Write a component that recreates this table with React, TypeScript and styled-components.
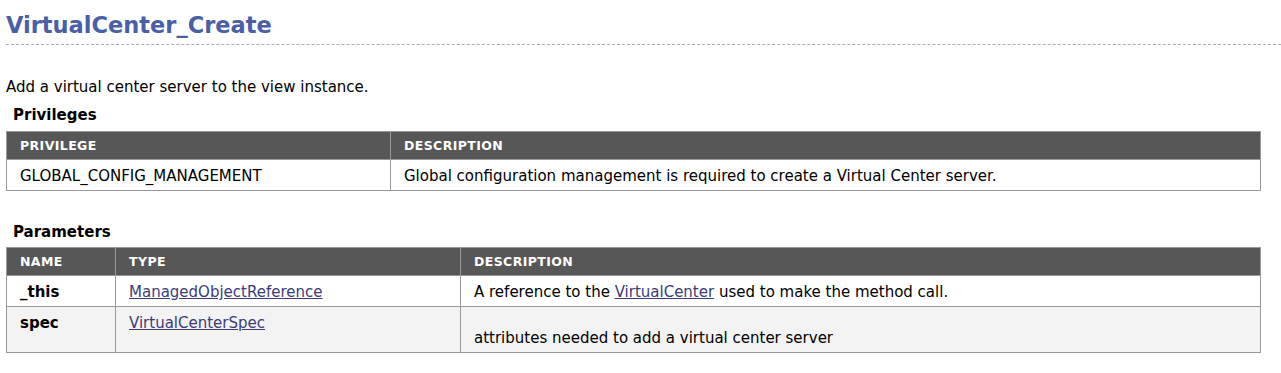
import React from "react";
import styled, { createGlobalStyle } from "styled-components";

const GlobalStyle = createGlobalStyle`
  html, body { margin: 0; padding: 0; background: #ffffff; }
  body { font-family: "DejaVu Sans", Verdana, sans-serif; color: #000; }
`;

const Page = styled.div`
  padding-left: 6px;
`;

const Title = styled.h1`
  margin: 0;
  padding: 12px 0 5px 0;
  font-size: 22.5px;
  line-height: 27px;
  font-weight: bold;
  color: #4a5fa7;
  border-bottom: 1px dashed #9fb0ae;
`;

const Lead = styled.p`
  margin: 33px 0 0 0;
  font-size: 15px;
  line-height: 18px;
`;

const SectionTitle = styled.h3<{ $gap: number }>`
  margin: ${(p) => p.$gap}px 0 ${(p) => (p.$gap > 20 ? 6 : 7)}px 7px;
  font-size: 15px;
  line-height: 18px;
  font-weight: bold;
`;

const Table = styled.table`
  width: 1254px;
  border-collapse: collapse;
  table-layout: fixed;
  font-size: 15px;
  border: 1px solid #999;
`;

const HeadCell = styled.th`
  background: #575757;
  color: #fff;
  text-align: left;
  font-size: 12.5px;
  line-height: 15px;
  font-weight: bold;
  letter-spacing: 0.4px;
  text-transform: uppercase;
  padding: 6px 13px;
  border: 1px solid #999;
`;

const Row = styled.tr<{ $alt?: boolean }>`
  background: ${(p) => (p.$alt ? "#f3f3f3" : "#ffffff")};
`;

const Cell = styled.td<{ $bold?: boolean }>`
  vertical-align: top;
  padding: 7px 13px 5px 13px;
  line-height: 18px;
  font-weight: ${(p) => (p.$bold ? "bold" : "normal")};
  border: 1px solid #999;
`;

const Link = styled.a`
  color: #3c3c78;
  text-decoration: underline;
`;

const LowerText = styled.div`
  margin: 15px 0 0 0;
`;

export default function App() {
  return (
    <Page>
      <GlobalStyle />
      <Title>VirtualCenter_Create</Title>
      <Lead>Add a virtual center server to the view instance.</Lead>
      <SectionTitle $gap={10}>Privileges</SectionTitle>
      <Table>
        <colgroup>
          <col style={{ width: 384 }} />
          <col style={{ width: 870 }} />
        </colgroup>
        <thead>
          <tr>
            <HeadCell>Privilege</HeadCell>
            <HeadCell>Description</HeadCell>
          </tr>
        </thead>
        <tbody>
          <Row>
            <Cell>GLOBAL_CONFIG_MANAGEMENT</Cell>
            <Cell>Global configuration management is required to create a Virtual Center server.</Cell>
          </Row>
        </tbody>
      </Table>
      <SectionTitle $gap={32}>Parameters</SectionTitle>
      <Table>
        <colgroup>
          <col style={{ width: 109 }} />
          <col style={{ width: 345 }} />
          <col style={{ width: 800 }} />
        </colgroup>
        <thead>
          <tr>
            <HeadCell>Name</HeadCell>
            <HeadCell>Type</HeadCell>
            <HeadCell>Description</HeadCell>
          </tr>
        </thead>
        <tbody>
          <Row>
            <Cell $bold>_this</Cell>
            <Cell>
              <Link href="#">ManagedObjectReference</Link>
            </Cell>
            <Cell>
              A reference to the <Link href="#">VirtualCenter</Link> used to make the method call.
            </Cell>
          </Row>
          <Row $alt>
            <Cell $bold>spec</Cell>
            <Cell>
              <Link href="#">VirtualCenterSpec</Link>
            </Cell>
            <Cell>
              <LowerText>attributes needed to add a virtual center server</LowerText>
            </Cell>
          </Row>
        </tbody>
      </Table>
    </Page>
  );
}
